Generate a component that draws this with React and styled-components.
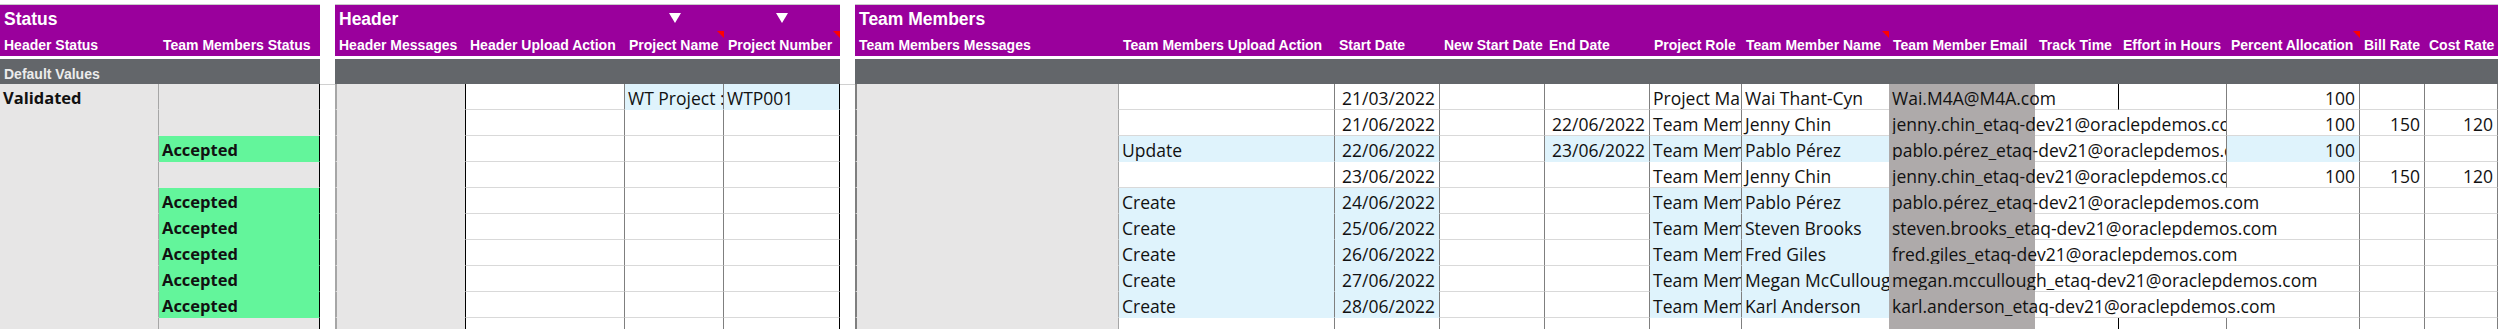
import React from 'react';
import styled, { createGlobalStyle, css } from 'styled-components';

const GlobalStyle = createGlobalStyle`
  html, body { margin: 0; padding: 0; background: #fff; }
  body { font-family: 'Open Sans', 'Liberation Sans', sans-serif; }
`;

const PURPLE = '#9a009c';
const FILLS = { light: '#e7e6e6', blue: '#dff3fc', green: '#63f59b', grey: '#aeaaaa' };
const EDGES = { black: '#000', dark: '#7f7f7f', gray: '#a6a6a6' };

const Sheet = styled.div`
  display: flex;
  align-items: flex-start;
  width: 2500px;
  height: 329px;
  padding-top: 4px;
  box-sizing: border-box;
  overflow: hidden;
`;

const Gap = styled.div`
  flex: 0 0 ${p => p.$w}px;
  height: 80px;
  border-bottom: 1px solid #d0d0d0;
`;

const Section = styled.section`
  flex: 0 0 auto;
  display: flex;
  flex-direction: column;
`;

const Head = styled.div`
  background: ${PURPLE};
  border-top: 1px solid #c9c9c9;
  color: #fff;
  font-family: 'Liberation Sans', Arial, sans-serif;
  font-weight: 700;
`;

const Row = styled.div`
  display: grid;
  grid-template-columns: ${p => p.$cols};
  height: ${p => p.$h}px;
`;

const TitleCell = styled.div`
  display: flex;
  justify-content: ${p => (p.$center ? 'center' : 'flex-start')};
  align-items: flex-start;
  padding: ${p => (p.$center ? '8px 0 0' : '4px 0 0 4px')};
  font-size: 17.5px;
  line-height: 20px;
  white-space: nowrap;
`;

const Arrow = styled.span`
  width: 0;
  height: 0;
  border-left: 6px solid transparent;
  border-right: 6px solid transparent;
  border-top: 10px solid #fff;
`;

const LabelCell = styled.div`
  position: relative;
  display: flex;
  align-items: flex-end;
  padding: 0 0 2px 4px;
  font-size: 14px;
  line-height: 17px;
  white-space: nowrap;
  overflow: hidden;
  ${p => p.$note && css`
    &::after {
      content: '';
      position: absolute;
      top: 0;
      right: 0;
      border-top: 7px solid #ff0000;
      border-left: 7px solid transparent;
    }
  `}
`;

const Band = styled.div`
  margin-top: 3px;
  height: 25px;
  box-sizing: border-box;
  padding: 7px 0 0 4px;
  background: #63666a;
  color: #ececec;
  font-family: 'Liberation Sans', Arial, sans-serif;
  font-weight: 700;
  font-size: 14px;
  line-height: 16px;
  white-space: nowrap;
`;

const Cell = styled.div`
  position: relative;
  box-sizing: border-box;
  display: flex;
  align-items: flex-end;
  justify-content: ${p => (p.$right ? 'flex-end' : 'flex-start')};
  padding: 0 4px 1px 3px;
  background: ${p => FILLS[p.$fill] || '#fff'};
  border-bottom: 1px solid ${p => (p.$fill ? FILLS[p.$fill] : '#d9d9d9')};
  border-right: ${p => (p.$edge ? `1px solid ${EDGES[p.$edge]}` : 'none')};
  border-left: ${p => (p.$lead ? `2px solid ${EDGES[p.$lead]}` : 'none')};
  font-size: ${p => (p.$bold ? 16.5 : 17.5)}px;
  line-height: 20px;
  font-weight: ${p => (p.$bold ? 700 : 400)};
  color: #111;
  white-space: nowrap;
  overflow: hidden;
  ${p => p.$spill && css`
    overflow: visible;
    z-index: 1;
  `}
`;

const Spill = styled.span`
  display: block;
  flex: 0 0 ${p => p.$w}px;
  width: ${p => p.$w}px;
  overflow: hidden;
`;

const STATUS_COLS = [
  { w: 159, fill: 'light', edge: 'gray' },
  { w: 161, fill: 'light', edge: 'black' },
];

const HEADER_COLS = [
  { w: 131, fill: 'light', edge: 'black', lead: 'gray' },
  { w: 159, edge: 'dark' },
  { w: 99, edge: 'dark' },
  { w: 116, edge: 'black' },
];

const MEMBER_COLS = [
  { key: 'msg', w: 264, fill: 'light', edge: 'gray', lead: 'dark' },
  { key: 'action', w: 216, edge: 'dark' },
  { key: 'start', w: 105, edge: 'dark', right: true },
  { key: 'newStart', w: 105, edge: 'dark', right: true },
  { key: 'end', w: 105, edge: 'dark', right: true },
  { key: 'role', w: 92, edge: 'dark' },
  { key: 'name', w: 147 },
  { key: 'email', w: 146, fill: 'grey' },
  { key: 'track', w: 84, edge: 'black' },
  { key: 'effort', w: 108, edge: 'dark' },
  { key: 'pct', w: 133, edge: 'dark', right: true },
  { key: 'bill', w: 65, edge: 'dark', right: true },
  { key: 'cost', w: 73, edge: 'dark', right: true },
];

const accepted = [{}, { text: 'Accepted', bold: true, fill: 'green' }];
const STATUS_ROWS = [
  [{ text: 'Validated', bold: true }, {}],
  [],
  accepted,
  [],
  accepted,
  accepted,
  accepted,
  accepted,
  accepted,
  [],
];

const HEADER_ROWS = [
  [{}, {}, { text: 'WT Project :', fill: 'blue' }, { text: 'WTP001', fill: 'blue' }],
  [], [], [], [], [], [], [], [], [],
];

const created = ['action', 'start', 'role', 'name'];
const MEMBERS = [
  { start: '21/03/2022', role: 'Project Manager', name: 'Wai Thant-Cyn', email: 'Wai.M4A@M4A.com', pct: '100' },
  { start: '21/06/2022', end: '22/06/2022', role: 'Team Member', name: 'Jenny Chin', email: 'jenny.chin_etaq-dev21@oraclepdemos.com', pct: '100', bill: '150', cost: '120' },
  { action: 'Update', start: '22/06/2022', end: '23/06/2022', role: 'Team Member', name: 'Pablo Pérez', email: 'pablo.pérez_etaq-dev21@oraclepdemos.com', pct: '100', blue: ['action', 'start', 'end', 'role', 'name', 'pct'] },
  { start: '23/06/2022', role: 'Team Member', name: 'Jenny Chin', email: 'jenny.chin_etaq-dev21@oraclepdemos.com', pct: '100', bill: '150', cost: '120' },
  { action: 'Create', start: '24/06/2022', role: 'Team Member', name: 'Pablo Pérez', email: 'pablo.pérez_etaq-dev21@oraclepdemos.com', blue: created },
  { action: 'Create', start: '25/06/2022', role: 'Team Member', name: 'Steven Brooks', email: 'steven.brooks_etaq-dev21@oraclepdemos.com', blue: created },
  { action: 'Create', start: '26/06/2022', role: 'Team Member', name: 'Fred Giles', email: 'fred.giles_etaq-dev21@oraclepdemos.com', blue: created },
  { action: 'Create', start: '27/06/2022', role: 'Team Member', name: 'Megan McCullough', email: 'megan.mccullough_etaq-dev21@oraclepdemos.com', blue: created },
  { action: 'Create', start: '28/06/2022', role: 'Team Member', name: 'Karl Anderson', email: 'karl.anderson_etaq-dev21@oraclepdemos.com', blue: created },
  {},
];

// email text runs on over the empty cells to its right, like Excel does
const EMAIL = 7;
const MEMBER_ROWS = MEMBERS.map(m => {
  const blue = m.blue || [];
  const cells = MEMBER_COLS.map(c => ({ text: m[c.key], fill: blue.includes(c.key) ? 'blue' : undefined }));
  if (m.email) {
    let j = EMAIL + 1;
    while (j < MEMBER_COLS.length && !m[MEMBER_COLS[j].key]) j++;
    const room = MEMBER_COLS.slice(EMAIL, j).reduce((s, c) => s + c.w, 0) - 4;
    const reach = 3 + m.email.length * 9.6;
    cells[EMAIL].spill = room;
    let end = MEMBER_COLS[EMAIL].w;
    for (let k = EMAIL + 1; k < j; k++) {
      end += MEMBER_COLS[k].w;
      const clipped = k === j - 1 && j < MEMBER_COLS.length;
      if (!clipped && reach > end - 2) cells[k].noEdge = true;
    }
  }
  return cells;
});

const colsOf = cols => cols.map(c => `${c.w}px`).join(' ');

const Block = ({ cols, title, arrows = [], labels, notes = [], band, rows }) => {
  const grid = colsOf(cols);
  return (
    <Section>
      <Head>
        <Row $cols={grid} $h={26}>
          {cols.map((c, i) => (
            <TitleCell key={i} $center={arrows.includes(i)}>
              {i === 0 && title}
              {arrows.includes(i) && <Arrow />}
            </TitleCell>
          ))}
        </Row>
        <Row $cols={grid} $h={25}>
          {labels.map((l, i) => (
            <LabelCell key={l} $note={notes.includes(i)}>{l}</LabelCell>
          ))}
        </Row>
      </Head>
      <Band>{band}</Band>
      {rows.map((r, ri) => (
        <Row key={ri} $cols={grid} $h={26}>
          {cols.map((c, ci) => {
            const v = r[ci] || {};
            return (
              <Cell
                key={ci}
                $fill={v.fill || c.fill}
                $edge={v.noEdge ? null : c.edge}
                $lead={c.lead}
                $right={c.right}
                $bold={v.bold}
                $spill={!!v.spill}
              >
                {v.spill ? <Spill $w={v.spill}>{v.text}</Spill> : v.text}
              </Cell>
            );
          })}
        </Row>
      ))}
    </Section>
  );
};

export default function App() {
  return (
    <>
      <GlobalStyle />
      <Sheet>
        <Block
          cols={STATUS_COLS}
          title="Status"
          labels={['Header Status', 'Team Members Status']}
          band="Default Values"
          rows={STATUS_ROWS}
        />
        <Gap $w={15} />
        <Block
          cols={HEADER_COLS}
          title="Header"
          arrows={[2, 3]}
          labels={['Header Messages', 'Header Upload Action', 'Project Name', 'Project Number']}
          notes={[2, 3]}
          rows={HEADER_ROWS}
        />
        <Gap $w={15} />
        <Block
          cols={MEMBER_COLS}
          title="Team Members"
          labels={[
            'Team Members Messages', 'Team Members Upload Action', 'Start Date', 'New Start Date',
            'End Date', 'Project Role', 'Team Member Name', 'Team Member Email', 'Track Time',
            'Effort in Hours', 'Percent Allocation', 'Bill Rate', 'Cost Rate',
          ]}
          notes={[6, 10]}
          rows={MEMBER_ROWS}
        />
      </Sheet>
    </>
  );
}
